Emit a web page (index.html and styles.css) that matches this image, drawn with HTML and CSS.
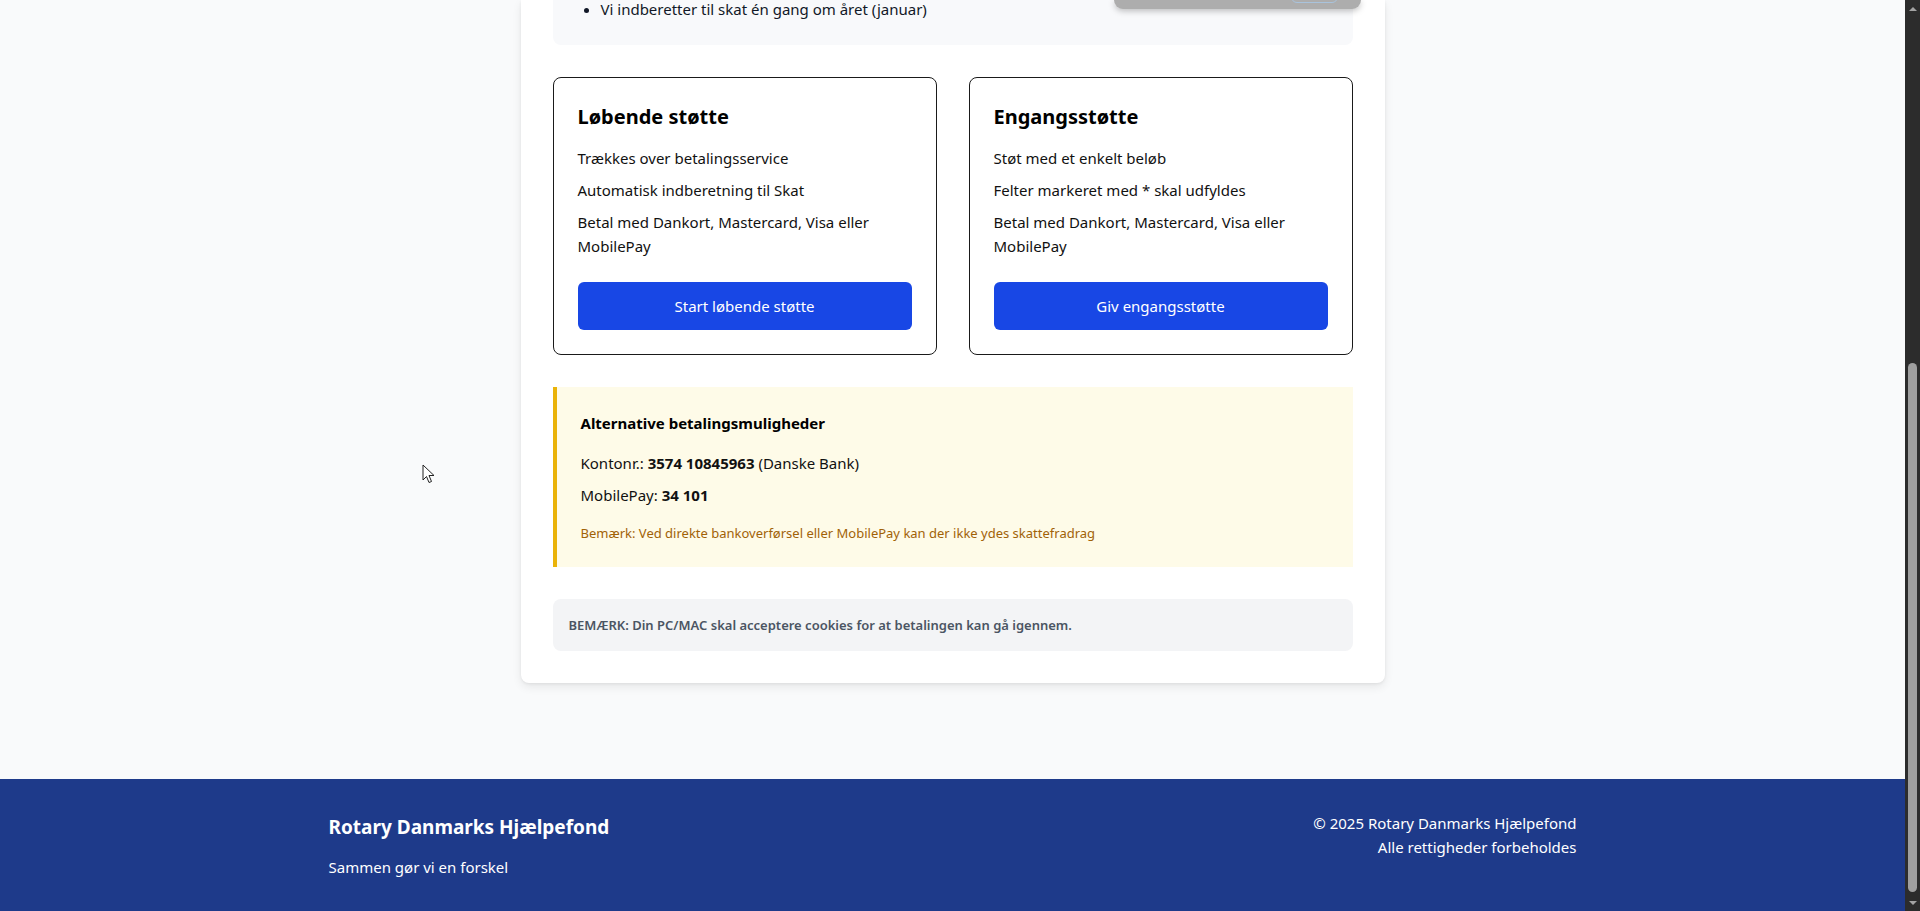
FILE: index.html
```html
<!DOCTYPE html>
<html lang="da">
<head>
<meta charset="utf-8">
<title>Støt Rotary Danmarks Hjælpefond</title>
<link rel="stylesheet" href="styles.css">
</head>
<body>
<div class="viewport">
  <div class="page">
    <main class="main">
      <section class="panel">
        <div class="info">
          <ul class="info-list">
            <li>Vi indberetter til skat én gang om året (januar)</li>
          </ul>
        </div>

        <div class="options">
          <div class="option">
            <h3 class="option-title">Løbende støtte</h3>
            <p class="option-line">Trækkes over betalingsservice</p>
            <p class="option-line">Automatisk indberetning til Skat</p>
            <p class="option-line">Betal med Dankort, Mastercard, Visa eller MobilePay</p>
            <button class="option-btn">Start løbende støtte</button>
          </div>
          <div class="option">
            <h3 class="option-title">Engangsstøtte</h3>
            <p class="option-line">Støt med et enkelt beløb</p>
            <p class="option-line">Felter markeret med * skal udfyldes</p>
            <p class="option-line">Betal med Dankort, Mastercard, Visa eller MobilePay</p>
            <button class="option-btn">Giv engangsstøtte</button>
          </div>
        </div>

        <div class="alt">
          <h4 class="alt-title">Alternative betalingsmuligheder</h4>
          <p class="alt-line alt-first">Kontonr.: <strong>3574 10845963</strong> (Danske Bank)</p>
          <p class="alt-line">MobilePay: <strong>34 101</strong></p>
          <p class="alt-note">Bemærk: Ved direkte bankoverførsel eller MobilePay kan der ikke ydes skattefradrag</p>
        </div>

        <div class="cookie-note">
          <p>BEMÆRK: Din PC/MAC skal acceptere cookies for at betalingen kan gå igennem.</p>
        </div>

        <div class="overlay-chip"><span class="chip-btn"></span></div>
      </section>
    </main>

    <footer class="footer">
      <div class="footer-inner">
        <div class="footer-brand">
          <h3 class="footer-title">Rotary Danmarks Hjælpefond</h3>
          <p class="footer-tag">Sammen gør vi en forskel</p>
        </div>
        <div class="footer-legal">
          <p>© 2025 Rotary Danmarks Hjælpefond</p>
          <p>Alle rettigheder forbeholdes</p>
        </div>
      </div>
    </footer>
  </div>

  <div class="scrollbar">
    <div class="sb-arrow sb-up"></div>
    <div class="sb-track"><div class="sb-thumb"></div></div>
    <div class="sb-arrow sb-down"></div>
  </div>
</div>

<svg class="cursor" width="13" height="20" viewBox="0 0 13 20" xmlns="http://www.w3.org/2000/svg">
  <path d="M1 1 L1 16 L4.5 12.5 L7 18.5 L9.5 17.5 L7 11.5 L12 11.5 Z" fill="#ffffff" stroke="#222" stroke-width="1" stroke-linejoin="round"/>
</svg>
</body>
</html>
```

FILE: styles.css
```css
* { box-sizing: border-box; }

html, body {
  margin: 0;
  padding: 0;
  height: 100%;
  overflow: hidden;
}

body {
  font-family: "Noto Sans", "Open Sans", sans-serif;
  color: #111827;
  background: #f9fafb;
}

.viewport {
  display: flex;
  height: 911px;
  position: relative;
}

.page {
  flex: 1;
  display: flex;
  flex-direction: column;
  min-width: 0;
}

.main {
  flex: 1;
}

.panel {
  position: relative;
  width: 864px;
  margin: 0 auto;
  background: #ffffff;
  border-radius: 0 0 8px 8px;
  box-shadow: 0 4px 10px rgba(0, 0, 0, 0.08), 0 1px 3px rgba(0, 0, 0, 0.06);
  padding: 0 32px 32px;
  display: flex;
  flex-direction: column;
  gap: 32px;
}

.info {
  background: #f8f9fb;
  border-radius: 0 0 8px 8px;
  padding: 0 24px 27px;
}

.info-list {
  margin: 0;
  padding-left: 24px;
  font-size: 15px;
  line-height: 18px;
}

.options {
  display: grid;
  grid-template-columns: 1fr 1fr;
  gap: 32px;
}

.option {
  border: 1px solid #1a1a1a;
  border-radius: 8px;
  padding: 24px;
  display: flex;
  flex-direction: column;
}

.option-title {
  margin: 1px 0 15px;
  font-size: 20px;
  line-height: 28px;
  font-weight: 700;
  color: #000;
}

.option-line {
  margin: 0 0 8px;
  font-size: 15px;
  line-height: 24px;
  color: #111;
}

.option-btn {
  margin-top: 16px;
  height: 48px;
  border: 0;
  border-radius: 6px;
  background: #1847e5;
  color: #ffffff;
  font-family: inherit;
  font-size: 15px;
}

.alt {
  background: #fefbe8;
  border-left: 4px solid #eab308;
  padding: 24px 20px 24px 24px;
}

.alt-title {
  margin: 0 0 16px;
  font-size: 15px;
  line-height: 24px;
  font-weight: 700;
  color: #000;
}

.alt-line {
  margin: 0 0 8px;
  font-size: 15px;
  line-height: 24px;
  color: #111;
}

.alt-line strong { font-weight: 700; }

.alt-note {
  margin: 16px 0 0;
  font-size: 13px;
  line-height: 20px;
  color: #a16207;
}

.cookie-note {
  background: #f3f4f6;
  border-radius: 8px;
  padding: 16px;
}

.cookie-note p {
  margin: 0;
  font-size: 13px;
  line-height: 20px;
  font-weight: 600;
  color: #4b5563;
}

.overlay-chip {
  position: absolute;
  top: 0;
  left: 593px;
  width: 247px;
  height: 9px;
  background: #adadad;
  border-radius: 0 0 12px 12px;
  box-shadow: 0 2px 6px rgba(0, 0, 0, 0.25);
}

.chip-btn {
  position: absolute;
  left: 177px;
  top: -10px;
  width: 47px;
  height: 13px;
  border: 1px solid #a9c3dc;
  border-radius: 6px;
}

.footer {
  background: #1e3a8a;
  color: #ffffff;
  height: 132px;
}

.footer-inner {
  max-width: 1280px;
  margin: 0 auto;
  padding: 32px 16px;
  display: flex;
  justify-content: space-between;
  align-items: flex-start;
}

.footer-title {
  margin: 2px 0 0;
  font-size: 19px;
  line-height: 28px;
  font-weight: 700;
}

.footer-tag {
  margin: 14px 0 0;
  font-size: 15px;
  line-height: 24px;
}

.footer-legal {
  text-align: right;
  font-size: 15px;
  line-height: 24px;
}

.footer-legal p { margin: 0; }

.scrollbar {
  width: 15px;
  height: 911px;
  background: #2c2c2c;
  display: flex;
  flex-direction: column;
  align-items: center;
}

.sb-arrow {
  height: 17px;
  width: 15px;
  display: flex;
  justify-content: center;
  align-items: center;
}

.sb-up::before,
.sb-down::before {
  content: "";
  width: 0;
  height: 0;
  border-left: 4px solid transparent;
  border-right: 4px solid transparent;
}

.sb-up::before { border-bottom: 4px solid #a3a3a3; }
.sb-down::before { border-top: 4px solid #a3a3a3; }

.sb-track {
  flex: 1;
  width: 15px;
  display: flex;
  justify-content: center;
}

.sb-thumb {
  margin-top: 346px;
  width: 9px;
  height: 529px;
  background: #9f9f9f;
  border-radius: 5px;
}

.cursor {
  position: absolute;
  left: 422px;
  top: 464px;
  pointer-events: none;
}
```
